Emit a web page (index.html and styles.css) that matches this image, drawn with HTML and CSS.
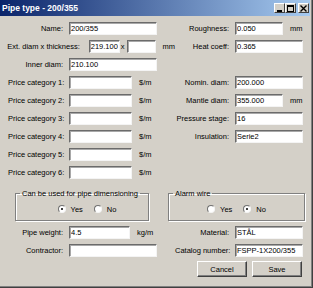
FILE: index.html
```html
<!DOCTYPE html>
<html lang="en">
<head>
  <meta charset="UTF-8">
  <title>Pipe type - 200/355</title>
  <link rel="stylesheet" href="styles.css">
</head>
<body>
  <div class="window">
    <div class="titlebar">
      <span class="title">Pipe type - 200/355</span>
      <div class="caption-buttons">
        <span class="cap-btn">
          <svg width="9" height="7" viewBox="0 0 9 7"><rect x="2" y="5" width="5" height="2" fill="#000"/></svg>
        </span>
        <span class="cap-btn">
          <svg width="9" height="7" viewBox="0 0 9 7"><rect x="1.5" y="0.5" width="6" height="6" fill="none" stroke="#000"/><rect x="1" y="0" width="7" height="2" fill="#000"/></svg>
        </span>
        <span class="cap-btn close">
          <svg width="9" height="7" viewBox="0 0 9 7"><path d="M1.5 0.5 L7.5 6.5 M7.5 0.5 L1.5 6.5" stroke="#000" stroke-width="1.4"/></svg>
        </span>
      </div>
    </div>

    <div class="content">
      <div class="row">
        <div class="half-left">
          <label class="lbl">Name:</label>
          <input class="field w-long" type="text" value="200/355">
        </div>
        <div class="half-right">
          <label class="lbl-r">Roughness:</label>
          <input class="field w-short" type="text" value="0.050"><span class="unit">mm</span>
        </div>
      </div>

      <div class="row">
        <div class="half-left">
          <label class="lbl wide">Ext. diam x thickness:</label>
          <input class="field w-ext1" type="text" value="219.100"><span class="times">x</span><input class="field w-ext2" type="text" value=""><span class="unit">mm</span>
        </div>
        <div class="half-right">
          <label class="lbl-r">Heat coeff:</label>
          <input class="field w-full" type="text" value="0.365">
        </div>
      </div>

      <div class="row">
        <div class="half-left">
          <label class="lbl">Inner diam:</label>
          <input class="field w-long" type="text" value="210.100">
        </div>
      </div>

      <div class="row">
        <div class="half-left">
          <label class="lbl price">Price category 1:</label>
          <input class="field w-price" type="text" value=""><span class="unit">$/m</span>
        </div>
        <div class="half-right">
          <label class="lbl-r">Nomin. diam:</label>
          <input class="field w-full" type="text" value="200.000">
        </div>
      </div>

      <div class="row">
        <div class="half-left">
          <label class="lbl price">Price category 2:</label>
          <input class="field w-price" type="text" value=""><span class="unit">$/m</span>
        </div>
        <div class="half-right">
          <label class="lbl-r">Mantle diam:</label>
          <input class="field w-short" type="text" value="355.000"><span class="unit">mm</span>
        </div>
      </div>

      <div class="row">
        <div class="half-left">
          <label class="lbl price">Price category 3:</label>
          <input class="field w-price" type="text" value=""><span class="unit">$/m</span>
        </div>
        <div class="half-right">
          <label class="lbl-r">Pressure stage:</label>
          <input class="field w-full" type="text" value="16">
        </div>
      </div>

      <div class="row">
        <div class="half-left">
          <label class="lbl price">Price category 4:</label>
          <input class="field w-price" type="text" value=""><span class="unit">$/m</span>
        </div>
        <div class="half-right">
          <label class="lbl-r">Insulation:</label>
          <input class="field w-full" type="text" value="Serie2">
        </div>
      </div>

      <div class="row">
        <div class="half-left">
          <label class="lbl price">Price category 5:</label>
          <input class="field w-price" type="text" value=""><span class="unit">$/m</span>
        </div>
      </div>

      <div class="row">
        <div class="half-left">
          <label class="lbl price">Price category 6:</label>
          <input class="field w-price" type="text" value=""><span class="unit">$/m</span>
        </div>
      </div>

      <div class="groups">
        <fieldset class="group group-dim">
          <legend>Can be used for pipe dimensioning</legend>
          <div class="radios">
            <span class="radio-item"><span class="radio checked"></span>Yes</span>
            <span class="radio-item"><span class="radio"></span>No</span>
          </div>
        </fieldset>
        <fieldset class="group group-alarm">
          <legend>Alarm wire</legend>
          <div class="radios">
            <span class="radio-item"><span class="radio"></span>Yes</span>
            <span class="radio-item"><span class="radio checked"></span>No</span>
          </div>
        </fieldset>
      </div>

      <div class="row">
        <div class="half-left">
          <label class="lbl">Pipe weight:</label>
          <input class="field w-weight" type="text" value="4.5"><span class="unit">kg/m</span>
        </div>
        <div class="half-right">
          <label class="lbl-r">Material:</label>
          <input class="field w-full" type="text" value="STÅL">
        </div>
      </div>

      <div class="row last">
        <div class="half-left">
          <label class="lbl">Contractor:</label>
          <input class="field w-long" type="text" value="">
        </div>
        <div class="half-right">
          <label class="lbl-r">Catalog number:</label>
          <input class="field w-full" type="text" value="FSPP-1X200/355">
        </div>
      </div>

      <div class="buttons">
        <button class="btn">Cancel</button>
        <button class="btn">Save</button>
      </div>
    </div>
  </div>
</body>
</html>
```

FILE: styles.css
```css
body {
  margin: 0;
  font-family: "Liberation Sans", Arial, sans-serif;
  font-size: 7.5px;
  color: #000;
}
.window {
  width: 313px;
  height: 288px;
  box-sizing: border-box;
  background: #d4d0c8;
  border-right: 1px solid #404040;
  border-bottom: 1px solid #404040;
  box-shadow: inset -1px -1px 0 #808080;
  padding-right: 2px;
}
.titlebar {
  height: 16px;
  display: flex;
  align-items: center;
  justify-content: space-between;
  padding: 0 1px 0 2px;
  background: linear-gradient(to right, #0a246a, #a6caf0);
  color: #fff;
}
.title {
  font-weight: bold;
  font-size: 8.5px;
}
.caption-buttons {
  display: flex;
}
.cap-btn {
  width: 11px;
  height: 10px;
  box-sizing: border-box;
  display: flex;
  align-items: center;
  justify-content: center;
  background: #d4d0c8;
  border: 1px solid;
  border-color: #fff #404040 #404040 #fff;
}
.cap-btn.close {
  margin-left: 2px;
}
.content {
  padding-top: 6px;
}
.row {
  display: flex;
  align-items: center;
  height: 13px;
  margin-bottom: 5px;
}
.row.last {
  margin-bottom: 4px;
}
.half-left {
  width: 175px;
  display: flex;
  align-items: center;
}
.half-right {
  display: flex;
  align-items: center;
}
.lbl {
  width: 63px;
  margin-right: 6px;
  text-align: right;
  white-space: nowrap;
}
.lbl.wide {
  width: 80px;
  margin-right: 9px;
}
.lbl.price {
  width: 69px;
  box-sizing: border-box;
  padding-left: 8px;
  margin-right: 0;
  text-align: left;
}
.lbl-r {
  width: 54px;
  margin-right: 6px;
  text-align: right;
  white-space: nowrap;
}
.field {
  height: 13px;
  box-sizing: border-box;
  margin: 0;
  padding: 0 1px;
  font: inherit;
  color: #000;
  background: #fff;
  border: 1px solid;
  border-color: #6b6b6b #f4f4f4 #f4f4f4 #6b6b6b;
  box-shadow: inset 1px 1px 0 #a8a8a8;
  outline: none;
}
.w-long { width: 88px; }
.w-short { width: 48px; }
.w-full { width: 68px; }
.w-price { width: 63px; }
.w-ext1 { width: 31px; }
.w-ext2 { width: 29px; }
.w-weight { width: 61px; }
.times {
  margin: 0 2px 0 1px;
}
.unit {
  margin-left: 7px;
}
.groups {
  display: flex;
  margin-top: 10px;
  margin-bottom: 5px;
}
.group {
  margin: 0;
  padding: 6px 0 6px;
  box-sizing: border-box;
  min-width: 0;
  border: 1px solid #808080;
  box-shadow: 1px 1px 0 #fff, inset 1px 1px 0 #fff;
}
.group legend {
  margin-left: 4px;
  padding: 0 2px;
  line-height: 9px;
}
.group-dim {
  margin-left: 15px;
  width: 134px;
}
.group-alarm {
  margin-left: 19px;
  width: 137px;
}
.radios {
  display: flex;
  justify-content: center;
  align-items: center;
  gap: 11px;
  height: 10px;
}
.group-dim .radios {
  padding-left: 10px;
}
.radio-item {
  display: flex;
  align-items: center;
  gap: 5px;
}
.radio {
  width: 8px;
  height: 8px;
  box-sizing: border-box;
  border-radius: 50%;
  background: #fff;
  border: 1px solid;
  border-color: #707070 #f4f4f4 #f4f4f4 #707070;
  display: flex;
  align-items: center;
  justify-content: center;
}
.radio.checked::after {
  content: "";
  width: 2px;
  height: 2px;
  background: #000;
  border-radius: 50%;
}
.buttons {
  display: flex;
  justify-content: flex-end;
  gap: 5px;
  padding-right: 8px;
}
.btn {
  width: 50px;
  height: 16px;
  margin: 0;
  padding: 0;
  font: inherit;
  color: #000;
  background: #d4d0c8;
  border: 1px solid;
  border-color: #fff #404040 #404040 #fff;
  box-shadow: inset -1px -1px 0 #808080;
}
```
